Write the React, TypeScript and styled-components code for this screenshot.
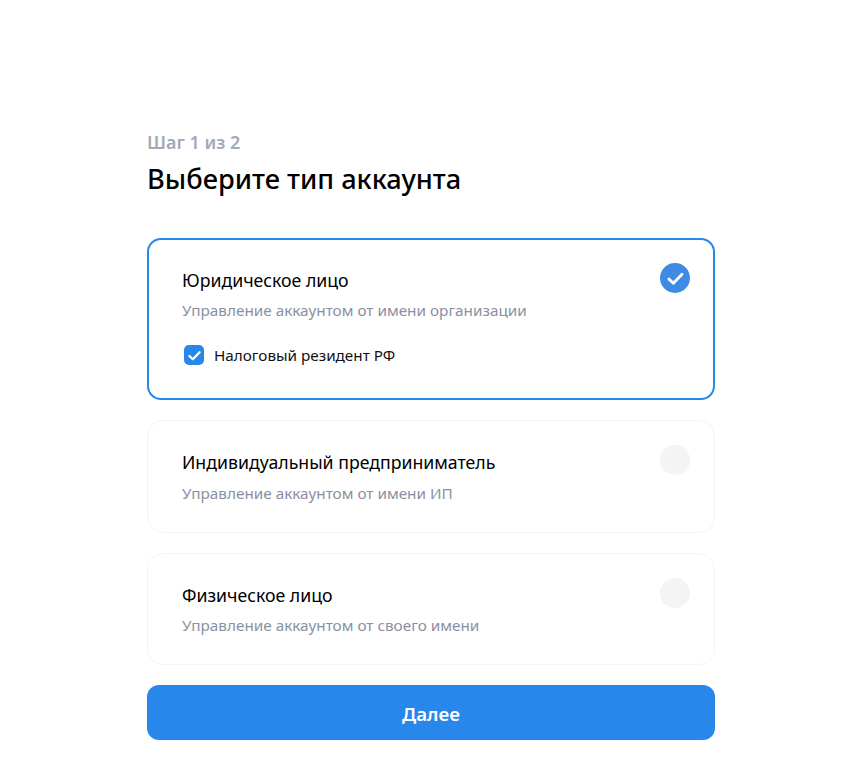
import React, { useState } from 'react';
import styled, { createGlobalStyle } from 'styled-components';

const GlobalStyle = createGlobalStyle`
  html, body {
    margin: 0;
    padding: 0;
    background: #fff;
    font-family: "Noto Sans", "Open Sans", sans-serif;
  }
`;

const Page = styled.div`
  width: 568px;
  margin-left: 147px;
  padding-top: 130px;
`;

const StepLabel = styled.div`
  font-size: 18px;
  line-height: 24px;
  font-weight: 600;
  color: #a4a9b8;
`;

const Title = styled.h1`
  margin: 6px 0 41px;
  font-size: 27.2px;
  line-height: 37px;
  font-weight: 500;
  color: #000;
`;

const Options = styled.div`
  display: flex;
  flex-direction: column;
  gap: 20px;
`;

const Card = styled.div<{ $active?: boolean; $height: number }>`
  position: relative;
  box-sizing: border-box;
  height: ${(p) => p.$height}px;
  padding: ${(p) => (p.$active ? '28px 33px 0' : '29px 34px 0')};
  border: ${(p) => (p.$active ? '2px solid #2787eb' : '1px solid #f3f4f6')};
  border-radius: ${(p) => (p.$active ? '14px' : '16px')};
  cursor: pointer;
`;

const CardTitle = styled.div`
  font-size: 17.7px;
  line-height: 24px;
  font-weight: 400;
  color: #000;
`;

const CardText = styled.div<{ $shift?: boolean }>`
  margin-top: ${(p) => (p.$shift ? '9px' : '8px')};
  font-size: 15.3px;
  line-height: 20px;
  color: #8a909f;
`;

const Radio = styled.div<{ $active?: boolean }>`
  position: absolute;
  top: ${(p) => (p.$active ? '23px' : '24px')};
  right: ${(p) => (p.$active ? '23px' : '24px')};
  width: 30px;
  height: 30px;
  border-radius: 50%;
  display: flex;
  align-items: center;
  justify-content: center;
  background: ${(p) => (p.$active ? '#3f8ae2' : '#f4f4f5')};
`;

const Resident = styled.label`
  display: flex;
  align-items: center;
  gap: 10px;
  margin: 25px 0 0 2px;
  font-size: 15.25px;
  line-height: 20px;
  color: #111;
`;

const Box = styled.span`
  width: 20px;
  height: 20px;
  border-radius: 5px;
  background: #2787eb;
  display: flex;
  align-items: center;
  justify-content: center;
`;

const NextButton = styled.button`
  display: block;
  width: 100%;
  height: 55px;
  margin-top: 20px;
  padding: 2px 0 0;
  border: 0;
  border-radius: 12px;
  background: #2787eb;
  color: #fff;
  font-family: inherit;
  font-size: 18.7px;
  font-weight: 600;
  cursor: pointer;
`;

const Check = ({ size }: { size: number }) => (
  <svg width={size} height={size} viewBox="0 0 16 16" fill="none">
    <path d="M2.5 8.5 6.2 12 13.5 4.5" stroke="#fff" strokeWidth="2.4" strokeLinecap="round" strokeLinejoin="round" />
  </svg>
);

export default function App() {
  const [step] = useState(1);

  return (
    <>
      <GlobalStyle />
      <Page>
        <StepLabel>Шаг {step} из 2</StepLabel>
        <Title>Выберите тип аккаунта</Title>
        <Options>
          <Card $active $height={162}>
            <CardTitle>Юридическое лицо</CardTitle>
            <CardText>Управление аккаунтом от имени организации</CardText>
            <Radio $active>
              <Check size={19} />
            </Radio>
            <Resident>
              <Box>
                <Check size={15} />
              </Box>
              Налоговый резидент РФ
            </Resident>
          </Card>
          <Card $height={113}>
            <CardTitle>Индивидуальный предприниматель</CardTitle>
            <CardText $shift>Управление аккаунтом от имени ИП</CardText>
            <Radio />
          </Card>
          <Card $height={112}>
            <CardTitle>Физическое лицо</CardTitle>
            <CardText>Управление аккаунтом от своего имени</CardText>
            <Radio />
          </Card>
        </Options>
        <NextButton>Далее</NextButton>
      </Page>
    </>
  );
}
